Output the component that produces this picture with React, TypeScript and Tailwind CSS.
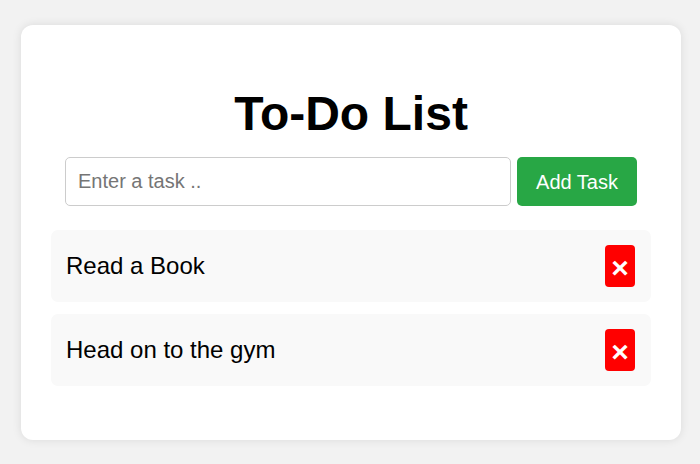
import React, { useState } from "react";

const initialTasks = ["Read a Book", "Head on to the gym"];

export default function App() {
  const [tasks, setTasks] = useState<string[]>(initialTasks);
  const [value, setValue] = useState("");

  const addTask = () => {
    if (!value.trim()) return;
    setTasks([...tasks, value.trim()]);
    setValue("");
  };

  return (
    <div className="min-h-[464px] w-full bg-[#f2f2f2] pt-[25px] font-['Liberation_Sans',Arial,sans-serif]">
      <div className="ml-[21px] w-[660px] rounded-[12px] bg-white px-[30px] pt-[61px] pb-[54px] shadow-[0_0_10px_rgba(0,0,0,0.1)]">
        <h1 className="text-center text-[48px] font-bold leading-[55px] text-black">To-Do List</h1>

        {/* Input row */}
        <div className="mx-[14px] mt-[16px] flex gap-[6px]">
          <input
            type="text"
            value={value}
            onChange={(e) => setValue(e.target.value)}
            placeholder="Enter a task .."
            className="h-[49px] flex-1 rounded-[5px] border border-[#cccccc] px-[12px] text-[20px] text-black outline-none placeholder:text-[#757575]"
          />
          <button
            onClick={addTask}
            className="h-[49px] w-[120px] rounded-[5px] bg-[#28a745] text-[20px] text-white"
          >
            Add Task
          </button>
        </div>

        {/* Task list */}
        <ul className="mt-[24px] flex flex-col gap-[12px]">
          {tasks.map((task, idx) => (
            <li
              key={idx}
              className="flex h-[72px] items-center justify-between rounded-[7px] bg-[#f9f9f9] pl-[15px] pr-[16px]"
            >
              <span className="text-[24px] text-black">{task}</span>
              <button
                onClick={() => setTasks(tasks.filter((_, i) => i !== idx))}
                className="flex h-[42px] w-[30px] items-center justify-center rounded-[4px] bg-[#ff0000] pt-[3px] text-[30px] font-bold leading-none text-white"
              >
                ×
              </button>
            </li>
          ))}
        </ul>
      </div>
    </div>
  );
}
